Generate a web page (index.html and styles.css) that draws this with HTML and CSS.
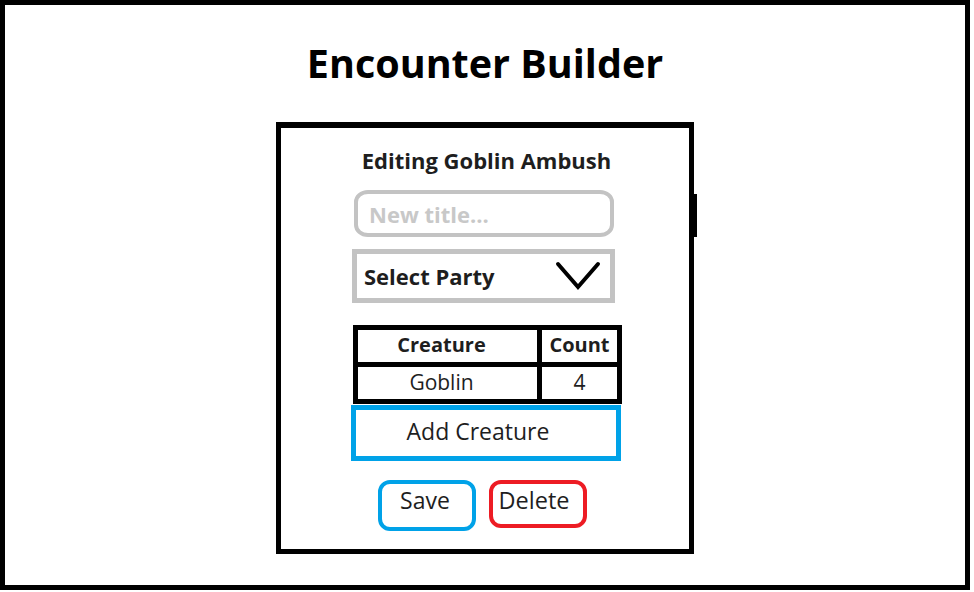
FILE: index.html
```html
<!DOCTYPE html>
<html>
<head>
<meta charset="utf-8">
<link rel="stylesheet" href="styles.css">
</head>
<body>
<div class="frame">
  <h1 class="title">Encounter Builder</h1>
  <div class="card">
    <h2 class="card-title">Editing Goblin Ambush</h2>
    <input class="title-input" type="text" placeholder="New title...">
    <div class="select">
      <span class="select-label">Select Party</span>
      <svg class="chevron" width="46" height="30" viewBox="0 0 46 30"><path d="M3 3 L23 26 L43 3" fill="none" stroke="#000" stroke-width="4" stroke-linecap="round" stroke-linejoin="miter"/></svg>
    </div>
    <div class="creature-table">
      <div class="cell head name">Creature</div>
      <div class="cell head">Count</div>
      <div class="cell name">Goblin</div>
      <div class="cell">4</div>
    </div>
    <div class="add-btn"><span>Add Creature</span></div>
    <div class="actions">
      <div class="btn save">Save</div>
      <div class="btn delete">Delete</div>
    </div>
  </div>
</div>
</body>
</html>
```
FILE: styles.css
```css
html, body {
  margin: 0;
  padding: 0;
  background: #fff;
}
body {
  font-family: "Open Sans", Lato, sans-serif;
  color: #1e1e1e;
}
.frame {
  box-sizing: border-box;
  width: 970px;
  height: 590px;
  border: 5px solid #000;
  display: flex;
  flex-direction: column;
  align-items: center;
}
.title {
  margin: 34px 0 0;
  font-size: 39.5px;
  line-height: 48px;
  font-weight: 700;
  color: #000;
}
.card {
  position: relative;
  box-sizing: border-box;
  width: 418px;
  height: 432px;
  margin-top: 35px;
  border: 5px solid #000;
  border-top-width: 6px;
  display: flex;
  flex-direction: column;
  align-items: flex-start;
}
.card::after {
  content: "";
  position: absolute;
  right: -8px;
  top: 66px;
  width: 3px;
  height: 43px;
  background: #000;
}
.card-title {
  align-self: center;
  margin: 20px 0 0 3px;
  font-size: 22px;
  line-height: 24px;
  font-weight: 700;
  color: #1e1e1e;
  white-space: nowrap;
}
.title-input {
  box-sizing: border-box;
  margin: 18px 0 0 73px;
  width: 260px;
  height: 47px;
  border: 4px solid #c3c3c3;
  border-radius: 14px / 12px;
  padding: 0 0 0 11px;
  font-family: "Open Sans", sans-serif;
  font-size: 22px;
  font-weight: 700;
  outline: none;
  background: #fff;
}
.title-input::placeholder {
  color: #c8c8c8;
}
.select {
  box-sizing: border-box;
  margin: 12px 0 0 71px;
  width: 263px;
  height: 54px;
  border: 5px solid #c3c3c3;
  display: flex;
  align-items: center;
  justify-content: space-between;
  padding: 0 9px 0 7px;
}
.select-label {
  font-size: 22px;
  font-weight: 700;
  color: #1e1e1e;
}
.chevron {
  display: block;
}
.creature-table {
  margin: 22px 0 0 72px;
  display: grid;
  grid-template-columns: 179px 75px;
  grid-template-rows: 32px 32px;
  gap: 5px;
  padding: 5px;
  background: #000;
}
.cell {
  background: #fff;
  display: flex;
  align-items: center;
  justify-content: center;
  font-size: 21px;
  padding-bottom: 2px;
}
.cell.head {
  font-size: 20px;
  font-weight: 700;
  padding-bottom: 4px;
}
.cell.name {
  padding-right: 12px;
}
.add-btn {
  box-sizing: border-box;
  margin: 1px 0 0 70px;
  width: 270px;
  height: 56px;
  border: 5px solid #00a2e8;
  display: flex;
  align-items: center;
  justify-content: center;
  padding: 0 16px 4px 0;
  font-size: 23px;
}
.actions {
  display: flex;
  gap: 13px;
  margin: 19px 0 0 97px;
  align-items: flex-start;
}
.btn {
  box-sizing: border-box;
  width: 98px;
  height: 51px;
  border: 4px solid;
  border-radius: 12px;
  display: flex;
  align-items: flex-start;
  justify-content: center;
  padding-top: 1px;
  line-height: 30px;
  font-size: 23px;
}
.btn.save {
  border-color: #00a2e8;
  padding-right: 4px;
}
.btn.delete {
  border-color: #ed1c24;
  height: 48px;
  font-size: 23.5px;
  padding-right: 8px;
}
```
